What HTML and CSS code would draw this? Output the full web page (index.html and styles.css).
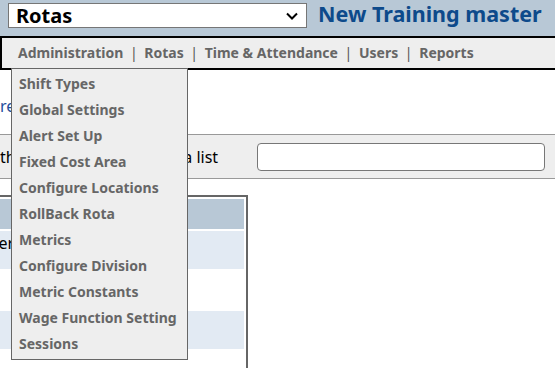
FILE: index.html
```html
<!DOCTYPE html>
<html lang="en">
<head>
    <meta charset="UTF-8">
    <meta name="viewport" content="width=device-width, initial-scale=1.0">
    <title>New Training master - Rotas</title>
    <link rel="stylesheet" href="styles.css">
</head>
<body>
    <div class="topbar">
        <div class="rota-select">
            <span>Rotas</span>
            <svg class="chevron" width="12" height="8" viewBox="0 0 12 8">
                <path d="M1 1.5 L6 6.5 L11 1.5" fill="none" stroke="#000" stroke-width="2"/>
            </svg>
        </div>
        <h1 class="site-title">New Training master</h1>
    </div>

    <nav class="main-nav">
        <ul class="nav-list">
            <li class="nav-item">Administration</li>
            <li class="nav-sep">|</li>
            <li class="nav-item">Rotas</li>
            <li class="nav-sep">|</li>
            <li class="nav-item">Time &amp; Attendance</li>
            <li class="nav-sep">|</li>
            <li class="nav-item">Users</li>
            <li class="nav-sep">|</li>
            <li class="nav-item">Reports</li>
        </ul>
        <!-- Administration menu is open -->
        <ul class="dropdown">
            <li>Shift Types</li>
            <li>Global Settings</li>
            <li>Alert Set Up</li>
            <li>Fixed Cost Area</li>
            <li>Configure Locations</li>
            <li>RollBack Rota</li>
            <li>Metrics</li>
            <li>Configure Division</li>
            <li>Metric Constants</li>
            <li>Wage Function Setting</li>
            <li>Sessions</li>
        </ul>
    </nav>

    <div class="content">
        <p class="back-link"><a href="#">return to rota list</a></p>
        <div class="filter-bar">
            <label class="filter-label" for="filter-input">the staff members from a list</label>
            <input type="text" id="filter-input" class="filter-input">
        </div>
        <table class="rota-table">
            <tr class="head-row"><th></th></tr>
            <tr class="alt-row"><td>Trainer</td></tr>
            <tr><td></td></tr>
            <tr class="alt-row"><td></td></tr>
            <tr><td></td></tr>
        </table>
    </div>
</body>
</html>
```

FILE: styles.css
```css
body {
    font-family: 'Noto Sans', 'DejaVu Sans', sans-serif;
    margin: 0;
    padding: 0;
    background-color: white;
    overflow: hidden;
    height: 368px;
}
.topbar {
    display: flex;
    align-items: flex-start;
    height: 33px;
    padding: 3px 0 0 8px;
    background-color: #b8c8d6;
}
.rota-select {
    display: flex;
    align-items: center;
    justify-content: space-between;
    box-sizing: border-box;
    width: 299px;
    height: 25px;
    padding: 0 8px 0 7px;
    background: white;
    border: 1px solid #767676;
    font-size: 20px;
    font-weight: bold;
    color: black;
}
.chevron {
    display: block;
}
.site-title {
    margin: -2px 0 0 11px;
    font-size: 21.5px;
    line-height: 25px;
    font-weight: bold;
    color: #0d4a8b;
    white-space: nowrap;
}
.main-nav {
    position: relative;
    height: 30px;
    border-top: 2px solid black;
    border-left: 2px solid black;
    border-bottom: 2px solid black;
    background-color: #eeeeee;
}
.nav-list {
    display: flex;
    margin: 0;
    padding: 0 0 0 16px;
    list-style: none;
    line-height: 29px;
    font-size: 14px;
    color: #666666;
    white-space: nowrap;
}
.nav-item {
    font-weight: bold;
}
.nav-sep {
    width: 21px;
    text-align: center;
    color: #555555;
}
.dropdown {
    position: absolute;
    top: 30px;
    left: 9px;
    z-index: 10;
    width: 175px;
    margin: 0;
    padding: 2px 0;
    list-style: none;
    background-color: #eeeeee;
    border: 1px solid #666666;
}
.dropdown li {
    height: 26px;
    line-height: 26px;
    padding-left: 7px;
    font-size: 14px;
    font-weight: bold;
    color: #666666;
    white-space: nowrap;
}
.content {
    font-size: 16px;
}
.back-link {
    margin: 26px 0 18px 0;
    line-height: 20px;
}
.back-link a {
    color: #1f4e9c;
    text-decoration: none;
}
.filter-bar {
    display: flex;
    align-items: center;
    height: 43px;
    padding-right: 10px;
    border-top: 1px solid #999999;
    border-bottom: 1px solid #999999;
    background-color: #eeeeee;
}
.filter-label {
    white-space: nowrap;
    color: black;
}
.filter-input {
    box-sizing: border-box;
    width: 288px;
    height: 28px;
    margin-left: auto;
    border: 1px solid #777777;
    border-radius: 4px;
    background: white;
}
.rota-table {
    width: 295px;
    margin: 16px 0 0 -47px;
    border: 2px solid #666666;
    border-spacing: 2px;
}
.rota-table th,
.rota-table td {
    padding: 2px 4px;
    text-align: left;
    vertical-align: top;
    font-weight: normal;
    line-height: 20px;
}
.head-row th {
    height: 26px;
    background-color: #b8c8d6;
}
.rota-table td {
    height: 34px;
}
.alt-row td {
    background-color: #e2eaf3;
}
```
